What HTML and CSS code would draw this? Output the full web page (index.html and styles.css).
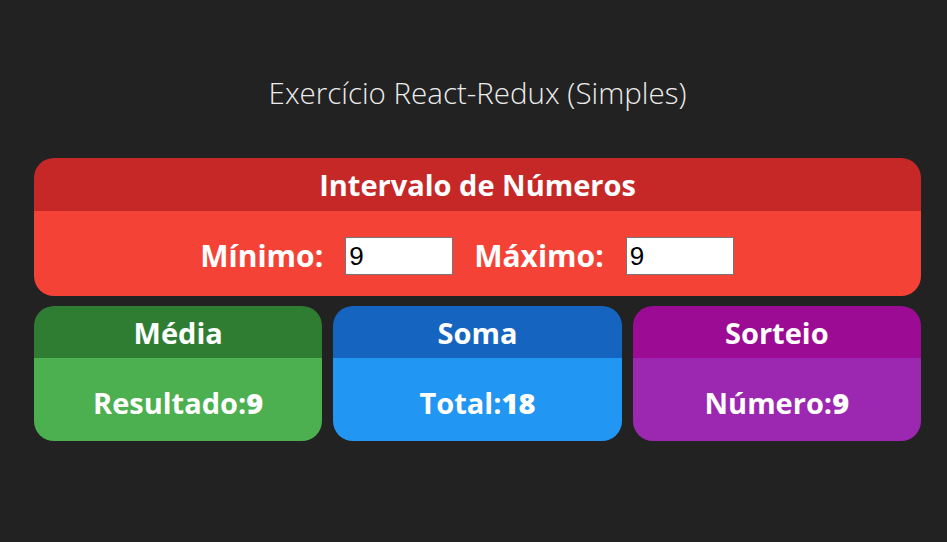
FILE: index.html
```html
<!DOCTYPE html>
<html lang="pt-BR">
<head>
<meta charset="utf-8">
<title>Exercício React-Redux (Simples)</title>
<link rel="stylesheet" href="styles.css">
</head>
<body>
<div class="app">
  <h1 class="title">Exercício React-Redux (Simples)</h1>
  <div class="cards">
    <div class="card card-red card-wide">
      <div class="card-header">Intervalo de Números</div>
      <div class="card-body">
        <span class="label">Mínimo:</span>
        <input class="num" type="number" value="9">
        <span class="label">Máximo:</span>
        <input class="num" type="number" value="9">
      </div>
    </div>
    <div class="row">
      <div class="card card-green">
        <div class="card-header">Média</div>
        <div class="card-body"><span>Resultado:</span><strong>9</strong></div>
      </div>
      <div class="card card-blue">
        <div class="card-header">Soma</div>
        <div class="card-body"><span>Total:</span><strong>18</strong></div>
      </div>
      <div class="card card-purple">
        <div class="card-header">Sorteio</div>
        <div class="card-body"><span>Número:</span><strong>9</strong></div>
      </div>
    </div>
  </div>
</div>
</body>
</html>
```

FILE: styles.css
```css
html, body {
  margin: 0;
  padding: 0;
  background: #222222;
  height: 100%;
}

body {
  font-family: "Open Sans", "Noto Sans", sans-serif;
  color: #ffffff;
}

.app {
  padding: 0 26px 0 34px;
}

.title {
  margin: 0;
  padding: 73px 0 45px;
  text-align: center;
  font-size: 29.5px;
  font-weight: 300;
  color: #ececec;
  line-height: 40px;
}

.cards {
  display: flex;
  flex-direction: column;
  gap: 10px;
}

.card {
  border-radius: 20px;
  overflow: hidden;
  display: flex;
  flex-direction: column;
  font-weight: 700;
}

.card-header {
  display: flex;
  align-items: center;
  justify-content: center;
  height: 53px;
  font-size: 29px;
  line-height: 1;
}

.card-body {
  display: flex;
  align-items: center;
  justify-content: center;
  font-size: 29px;
  line-height: 1;
}

.card-wide .card-body {
  height: 85px;
  padding-top: 5px;
  box-sizing: border-box;
}

.row {
  display: flex;
  gap: 11px;
}

.row .card {
  flex: 1;
}

.row .card-header {
  height: 52px;
}

.row .card-body {
  height: 83px;
  padding-top: 6px;
  box-sizing: border-box;
}

.label {
  margin-right: 22px;
  font-size: 30px;
}

.num {
  width: 108px;
  height: 38px;
  box-sizing: border-box;
  margin: 0 21px 0 0;
  padding: 0 3px;
  border: 1px solid #767676;
  background: #ffffff;
  color: #000000;
  font-family: "Liberation Sans", Arial, sans-serif;
  font-size: 26px;
  font-weight: 400;
  -moz-appearance: textfield;
  appearance: textfield;
}

.num::-webkit-outer-spin-button,
.num::-webkit-inner-spin-button {
  -webkit-appearance: none;
  margin: 0;
}

.card-red .card-header { background: #c62828; }
.card-red .card-body { background: #f44336; }
.card-green .card-header { background: #2e7d32; }
.card-green .card-body { background: #4caf50; }
.card-blue .card-header { background: #1565c0; }
.card-blue .card-body { background: #2196f3; }
.card-purple .card-header { background: #9c0b93; }
.card-purple .card-body { background: #9c27b0; }
```
